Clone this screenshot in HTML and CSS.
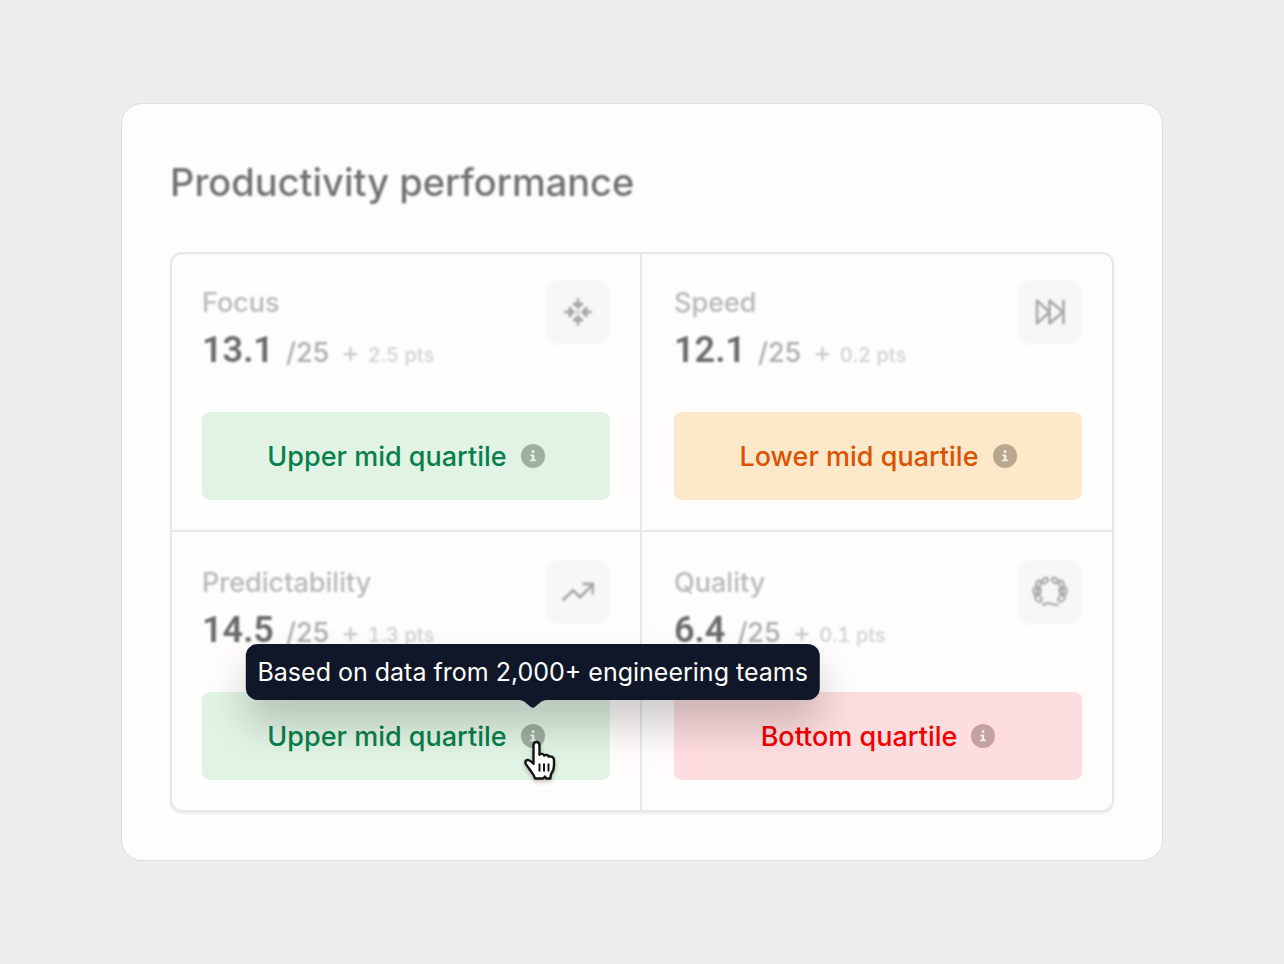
FILE: index.html
```html
<!DOCTYPE html>
<html lang="en">
<head>
    <meta charset="UTF-8">
    <meta name="viewport" content="width=device-width, initial-scale=1.0">
    <title>Productivity performance</title>
    <link rel="stylesheet" href="styles.css">
</head>
<body>
    <!-- shared info glyph -->
    <svg class="sprite" aria-hidden="true">
        <symbol id="info" viewBox="0 0 24 24">
            <circle cx="12" cy="12" r="12" fill="currentColor"/>
            <circle class="info-mark" cx="12" cy="7.6" r="1.5"/>
            <path class="info-mark" d="M9.3 10.5h4v5h1.5v1.8H9v-1.8h2v-3.2H9.3z"/>
        </symbol>
    </svg>

    <main class="card">
        <h1 class="title faded">Productivity performance</h1>

        <div class="metrics">
            <section class="metric">
                <header class="metric-head faded">
                    <div>
                        <h2 class="label">Focus</h2>
                        <p class="score"><span class="value">13.1</span><span class="total">/25</span><span class="plus">+</span><span class="delta">2.5 pts</span></p>
                    </div>
                    <div class="icon">
                        <svg viewBox="0 0 32 32" fill="none" stroke="currentColor" stroke-width="2.6" stroke-linecap="round" stroke-linejoin="round">
                            <path d="M16 3v8M12 7.5l4 4 4-4z"/>
                            <path d="M16 29v-8M12 24.5l4-4 4 4z"/>
                            <path d="M3 16h8M7.5 12l4 4-4 4z"/>
                            <path d="M29 16h-8M24.5 12l-4 4 4 4z"/>
                            <path d="M16 16h.1"/>
                        </svg>
                    </div>
                </header>
                <div class="quartile upper">
                    <span>Upper mid quartile</span>
                    <button class="info" type="button" aria-label="About this quartile"><svg><use href="#info"/></svg></button>
                </div>
            </section>

            <section class="metric">
                <header class="metric-head faded">
                    <div>
                        <h2 class="label">Speed</h2>
                        <p class="score"><span class="value">12.1</span><span class="total">/25</span><span class="plus">+</span><span class="delta">0.2 pts</span></p>
                    </div>
                    <div class="icon">
                        <svg viewBox="0 0 32 32" fill="none" stroke="currentColor" stroke-width="2.6" stroke-linejoin="round">
                            <path d="M3 4.5v23L15.5 16zM15.5 4.5v23L29 16z"/>
                            <path d="M29.5 4v24"/>
                        </svg>
                    </div>
                </header>
                <div class="quartile lower">
                    <span>Lower mid quartile</span>
                    <button class="info" type="button" aria-label="About this quartile"><svg><use href="#info"/></svg></button>
                </div>
            </section>

            <section class="metric">
                <header class="metric-head faded">
                    <div>
                        <h2 class="label">Predictability</h2>
                        <p class="score"><span class="value">14.5</span><span class="total">/25</span><span class="plus">+</span><span class="delta">1.3 pts</span></p>
                    </div>
                    <div class="icon">
                        <svg viewBox="0 0 32 32" fill="none" stroke="currentColor" stroke-width="2.8">
                            <path d="M.5 24.5L11 14.5l7 6.5L31 8.5"/>
                            <path d="M20.5 8H31v10.5"/>
                        </svg>
                    </div>
                </header>
                <div class="quartile upper">
                    <span>Upper mid quartile</span>
                    <button class="info" type="button" aria-label="About this quartile" aria-describedby="quartile-tip">
                        <svg><use href="#info"/></svg>
                        <span class="tooltip" id="quartile-tip" role="tooltip">Based on data from 2,000+ engineering teams
                            <svg class="arrow" viewBox="0 0 28 8"><path d="M0 0h28c-3 0-4.5 1-6 2l-6 5q-2 1.5-4 0L6 2C4.5 1 3 0 0 0z" fill="currentColor"/></svg>
                        </span>
                        <svg class="cursor" viewBox="0 0 32 42" aria-hidden="true">
                            <path d="M9.5 5.5c0-2 1.3-3.5 3-3.5s3 1.5 3 3.5v9.2c.8-1.2 4-1.2 4.7.8 1.2-1 4-.8 4.6 1.2 2-.8 5.2.2 5.2 3.300v5c0 4-1 6.500-2.600 8.500-.8 1.300-1 3-.9 5h-4.300l-1.200-2-1.800 2H11c-.4-2-1.500-4-3-5.800C6 30.500 5 28 2.800 25.500c-1.300-1.600-2-3.600-.8-4.800 1.800-1.700 5 .2 7.500 3.100z" fill="#fff" stroke="#141414" stroke-width="2.4" stroke-linejoin="round"/>
                            <path d="M15.5 23.500v8M20 23.500v8M24.500 23.500v8" stroke="#141414" stroke-width="2"/>
                        </svg>
                    </button>
                </div>
            </section>

            <section class="metric">
                <header class="metric-head faded">
                    <div>
                        <h2 class="label">Quality</h2>
                        <p class="score"><span class="value">6.4</span><span class="total">/25</span><span class="plus">+</span><span class="delta">0.1 pts</span></p>
                    </div>
                    <div class="icon">
                        <svg class="laurel" viewBox="0 0 36 32" fill="none" stroke="currentColor" stroke-width="2.2" stroke-linecap="round">
                            <ellipse cx="13" cy="4.5" rx="3.4" ry="2.2" transform="rotate(-35 13 4.5)"/>
                            <ellipse cx="6.5" cy="8" rx="2.2" ry="3.3" transform="rotate(20 6.5 8)"/>
                            <ellipse cx="3.5" cy="15" rx="2" ry="3.3"/>
                            <ellipse cx="7" cy="15.5" rx="1.6" ry="3" transform="rotate(20 7 15.5)"/>
                            <ellipse cx="6.5" cy="22.5" rx="3.8" ry="2.6" transform="rotate(40 6.5 22.5)"/>
                            <ellipse cx="23" cy="4.5" rx="3.4" ry="2.2" transform="rotate(35 23 4.5)"/>
                            <ellipse cx="29.5" cy="8" rx="2.2" ry="3.3" transform="rotate(-20 29.5 8)"/>
                            <ellipse cx="32.5" cy="15" rx="2" ry="3.3"/>
                            <ellipse cx="29" cy="15.500" rx="1.6" ry="3" transform="rotate(-20 29 15.5)"/>
                            <ellipse cx="29.5" cy="22.5" rx="3.8" ry="2.6" transform="rotate(-40 29.5 22.5)"/>
                            <path d="M11 29q3-2.500 7-1.500t8 1.500"/>
                        </svg>
                    </div>
                </header>
                <div class="quartile bottom">
                    <span>Bottom quartile</span>
                    <button class="info" type="button" aria-label="About this quartile"><svg><use href="#info"/></svg></button>
                </div>
            </section>
        </div>
    </main>
</body>
</html>
```
FILE: styles.css
```css
* {
    box-sizing: border-box;
}

body {
    margin: 0;
    min-height: 100vh;
    padding: 24px;
    display: flex;
    align-items: center;
    justify-content: center;
    background: #eeeced;
    font-family: Inter, "Liberation Sans", sans-serif;
    font-weight: 500;
}

h1, h2, p {
    margin: 0;
    font-weight: 500;
}

.sprite {
    position: absolute;
    width: 0;
    height: 0;
}

.card {
    width: 100%;
    max-width: 1040px;
    padding: 48px;
    background: #fefdfc;
    border-radius: 20px;
    box-shadow: 0 0 0 1px #dfdddf;
}

/* secondary content is pushed back so the quartiles stand out */
.faded {
    filter: blur(1px);
}

.title {
    margin-bottom: 40px;
    font-size: 38px;
    line-height: 60px;
    color: #717173;
}

.metrics {
    display: grid;
    grid-template-columns: 1fr 1fr;
    border-radius: 12px;
    box-shadow: 0 2px 2px #ededee;
}

.metric {
    padding: 26px 30px 30px;
    border: 2px solid #e4e8eb;
}

.metric:nth-child(even) {
    border-left: 0;
    padding-left: 32px;
}

.metric:nth-child(n+3) {
    border-top: 0;
    padding-top: 28px;
}

.metric:nth-child(1) {
    border-top-left-radius: 12px;
}

.metric:nth-child(2) {
    border-top-right-radius: 12px;
}

.metric:nth-child(3) {
    border-bottom-left-radius: 12px;
}

.metric:nth-child(4) {
    border-bottom-right-radius: 12px;
}

.metric-head {
    display: flex;
    justify-content: space-between;
    align-items: flex-start;
    height: 96px;
    margin-bottom: 36px;
}

.label {
    font-size: 27px;
    line-height: 46px;
    color: #b9b9ba;
}

.score {
    display: flex;
    align-items: baseline;
    line-height: 48px;
}

.value {
    font-family: Roboto, "Liberation Sans", sans-serif;
    font-size: 36px;
    font-weight: 600;
    color: #6b6b6d;
}

.total {
    margin-left: 12px;
    font-size: 27px;
    color: #adadae;
}

.plus {
    margin-left: 12px;
    font-size: 28px;
    font-weight: 400;
    color: #c8c8ca;
}

.delta {
    margin-left: 8px;
    font-size: 20px;
    font-variant-numeric: tabular-nums;
    color: #d2d2d4;
}

.icon {
    display: flex;
    align-items: center;
    justify-content: center;
    width: 64px;
    height: 64px;
    border-radius: 10px;
    background: #f7f7f7;
    color: #a9a9aa;
}

.icon svg {
    width: 32px;
    height: 32px;
}

.icon .laurel {
    width: 36px;
}

.quartile {
    display: flex;
    align-items: center;
    justify-content: center;
    gap: 14px;
    height: 88px;
    border-radius: 8px;
    font-size: 27px;
}

.upper {
    background: #e1f3e4;
    color: #08804c;
}

.lower {
    background: #fee8ca;
    color: #dd5200;
}

.bottom {
    background: #fddddf;
    color: #f30000;
}

.info {
    position: relative;
    display: flex;
    width: 24px;
    height: 24px;
    padding: 0;
    border: 0;
    background: none;
    font: inherit;
    cursor: pointer;
}

.info > svg {
    width: 24px;
    height: 24px;
}

.info-mark {
    fill: #fff;
    fill-opacity: .8;
}

.upper .info {
    color: #9db0a1;
}

.lower .info {
    color: #b9a88d;
}

.bottom .info {
    color: #c3a0a3;
}

.tooltip {
    position: absolute;
    z-index: 2;
    left: 50%;
    bottom: calc(100% + 24px);
    transform: translateX(-50%);
    padding: 0 12px;
    border-radius: 12px;
    background: #101728;
    box-shadow: 0 24px 40px rgba(0, 0, 0, .2);
    color: #fff;
    font-size: 25px;
    font-weight: 400;
    line-height: 56px;
    white-space: nowrap;
}

.arrow {
    position: absolute;
    top: 100%;
    left: 50%;
    width: 28px;
    height: 8px;
    transform: translateX(-50%);
    color: #101728;
}

.info .cursor {
    position: absolute;
    z-index: 3;
    top: 16px;
    left: 3px;
    width: 32px;
    height: 42px;
    filter: drop-shadow(0 2px 2px rgba(0, 0, 0, .25));
}
```
